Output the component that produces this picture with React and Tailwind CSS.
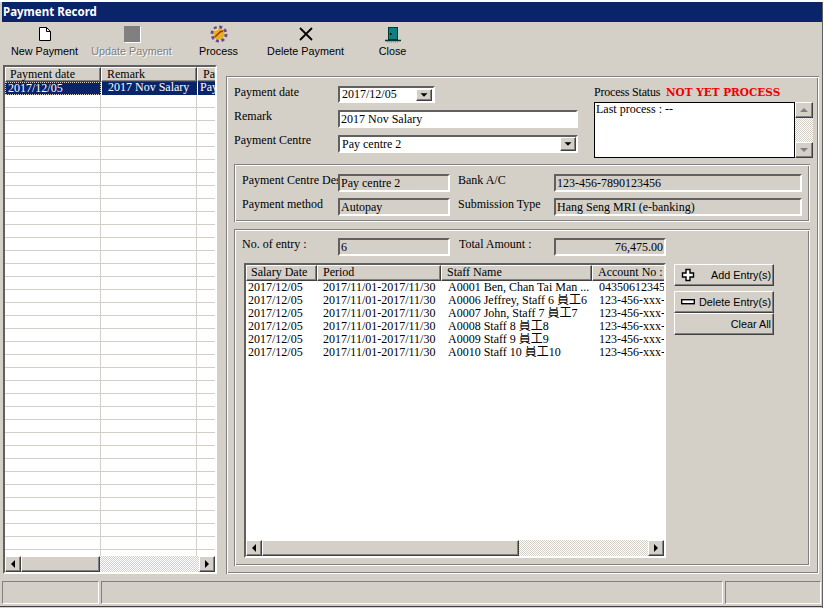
import React from "react";

const raised = "border border-t-white border-l-white border-r-[#404040] border-b-[#404040] shadow-[inset_-1px_-1px_0_#808080] bg-[#d4d0c8]";
const sunken = "border-2 border-t-[#606060] border-l-[#606060] border-r-white border-b-white";
const dither = "bg-[repeating-conic-gradient(#d4d0c8_0_25%,#ffffff_0_50%)] bg-[length:2px_2px]";
const etched = "shadow-[inset_1px_1px_0_#808080,inset_2px_2px_0_#ffffff,inset_-1px_-1px_0_#ffffff,inset_-2px_-2px_0_#808080]";
const sans = "font-[Liberation_Sans,sans-serif] text-[10.8px]";

const entries = [
  ["A0001 Ben, Chan Tai Man ...", "04350612345"],
  ["A0006 Jeffrey, Staff 6 員工6", "123-456-xxx-"],
  ["A0007 John, Staff 7 員工7", "123-456-xxx-"],
  ["A0008 Staff 8 員工8", "123-456-xxx-"],
  ["A0009 Staff 9 員工9", "123-456-xxx-"],
  ["A0010 Staff 10 員工10", "123-456-xxx-"],
];

const emptyRows = Array.from({ length: 36 });

const Arrow = ({ dir, muted }) => {
  const pts = {
    left: "6,4 6,12 2,8",
    right: "2,4 2,12 6,8",
    up: "4,6 12,6 8,2",
    down: "4,2 12,2 8,6",
  };
  const horizontal = dir === "left" || dir === "right";
  return (
    <svg width={horizontal ? 8 : 16} height={horizontal ? 16 : 8} viewBox={horizontal ? "0 0 8 16" : "0 0 16 8"}>
      <polygon points={pts[dir]} fill={muted ? "#808080" : "#000000"} />
    </svg>
  );
};

const ArrowBtn = ({ dir, muted, className }) => (
  <div className={`${raised} flex items-center justify-center shrink-0 ${className}`}>
    <Arrow dir={dir} muted={muted} />
  </div>
);

const HScroll = ({ thumb }) => (
  <div className="flex h-[16px] shrink-0">
    <ArrowBtn dir="left" className="w-[16px]" />
    <div className={`${raised} ${thumb} shrink-0`}></div>
    <div className={`flex-1 ${dither}`}></div>
    <ArrowBtn dir="right" className="w-[16px]" />
  </div>
);

const HeaderCell = ({ w, children, pl = "pl-[5px]", lead = "leading-[13px]" }) => (
  <div className={`${raised} ${w} ${pl} ${lead} h-full overflow-hidden whitespace-nowrap shrink-0`}>{children}</div>
);

const ToolButton = ({ label, disabled, children }) => (
  <div className="w-[87px] h-full flex flex-col items-center shrink-0">
    <div className="h-[24px] w-full flex items-center justify-center">{children}</div>
    <div className={`${sans} mt-[-2px] leading-[14px] whitespace-nowrap ${disabled ? "text-[#808080] [text-shadow:1px_1px_0_#ffffff]" : "text-black"}`}>{label}</div>
  </div>
);

const ReadOnly = ({ children, right }) => (
  <div className={`${sunken} h-[18px] pl-[1px] pr-[1px] leading-[15px] overflow-hidden whitespace-nowrap ${right ? "text-right" : ""}`}>{children}</div>
);

const Label = ({ children, className = "" }) => <div className={`leading-[13px] whitespace-nowrap overflow-hidden ${className}`}>{children}</div>;

const ActionButton = ({ className, children }) => (
  <div className={`${raised} ${sans} w-[100px] flex items-center pr-[2px] whitespace-nowrap ${className}`}>{children}</div>
);

export default function App() {
  return (
    <div className="w-[825px] h-[608px] overflow-hidden bg-white text-black text-[12px] font-[Liberation_Serif,Noto_Sans_CJK_TC,serif]">
      <div className="w-[823px] h-[607px] mt-[2px] bg-[#d4d0c8] border-r border-[#606060]">
        <div className="ml-[2px] h-[20px] bg-[#0a246a] text-white font-[Noto_Sans,sans-serif] font-bold text-[11.5px] leading-[19px] pl-[1px]">
          Payment Record
        </div>

        {/* toolbar */}
        <div className="h-[42px] flex pl-[1px]">
          <ToolButton label="New Payment">
            <svg width="14" height="16" viewBox="0 0 14 16">
              <path d="M1.5 1.5h7l4 4v9h-11z" fill="#ffffff" stroke="#000000" />
              <path d="M8.5 1.5v4h4" fill="none" stroke="#000000" />
            </svg>
          </ToolButton>
          <ToolButton label="Update Payment" disabled>
            <div className="w-[16px] h-[16px] bg-[#808080] shadow-[1px_1px_0_#ffffff]"></div>
          </ToolButton>
          <ToolButton label="Process">
            <svg width="18" height="18" viewBox="0 0 18 18">
              <circle cx="9" cy="9" r="7" fill="none" stroke="#6b4a8a" strokeWidth="3" strokeDasharray="3 2.5" />
              <circle cx="9" cy="9" r="5.5" fill="#e8b020" />
              <path d="M5 12 L10 7 L13 6" fill="none" stroke="#a03010" strokeWidth="1.5" />
              <path d="M5 5 L8 4" stroke="#ffe890" strokeWidth="1.5" />
            </svg>
          </ToolButton>
          <ToolButton label="Delete Payment">
            <svg width="16" height="16" viewBox="0 0 16 16">
              <path d="M2 2 L14 14 M14 2 L2 14" stroke="#000000" strokeWidth="1.8" />
            </svg>
          </ToolButton>
          <ToolButton label="Close">
            <svg width="18" height="17" viewBox="0 0 18 17">
              <rect x="4.5" y="1.5" width="9" height="12" fill="#0f8080" stroke="#003838" />
              <rect x="6" y="7" width="1.5" height="2" fill="#000000" />
              <path d="M1 14.5h16" stroke="#003838" strokeWidth="1.5" />
              <path d="M3 16h12" stroke="#808080" strokeDasharray="1 1" />
            </svg>
          </ToolButton>
        </div>

        <div className="flex mt-[1px] pl-[3px]">
          {/* payment list */}
          <div className={`${sunken} w-[214px] h-[509px] flex flex-col overflow-hidden shrink-0`}>
            <div className="h-[15px] flex shrink-0 overflow-hidden">
              <HeaderCell w="w-[96px]" pl="pl-[4px]" lead="leading-[12px]">Payment date</HeaderCell>
              <HeaderCell w="w-[96px]" lead="leading-[12px]">Remark</HeaderCell>
              <HeaderCell w="w-[30px]" lead="leading-[12px]">Pay</HeaderCell>
            </div>
            <div className="flex-1 bg-white overflow-hidden">
              <div className="h-[13px] flex bg-[#0a246a] text-white leading-[11px] whitespace-nowrap">
                <div className="w-[96px] pl-[2px] border border-dotted border-[#d4d0c8] shrink-0">2017/12/05</div>
                <div className="w-[96px] pl-[6px] border-l border-white shrink-0">2017 Nov Salary</div>
                <div className="flex-1 pl-[2px] border-l border-white overflow-hidden">Pay</div>
              </div>
              {emptyRows.map((_, i) => (
                <div key={i} className="h-[13px] flex border-b border-[#d4d0c8]">
                  <div className="w-[96px] border-r border-[#d4d0c8] shrink-0"></div>
                  <div className="w-[96px] border-r border-[#d4d0c8] shrink-0"></div>
                </div>
              ))}
            </div>
            <HScroll thumb="w-[79px]" />
          </div>

          {/* detail panel */}
          <div className={`${etched} ml-[9px] mt-[11px] w-[593px] h-[498px] pl-[8px] pt-[10px] shrink-0`}>
            <div className="h-[78px] flex">
              <div className="w-[344px] shrink-0">
                <div className="grid grid-cols-[104px_240px] grid-rows-[17px_18px_18px] gap-y-[7px]">
                  <Label>Payment date</Label>
                  <div className={`${sunken} w-[97px] h-[17px] bg-white flex items-center justify-between pl-[2px] pr-[1px]`}>
                    <span className="leading-[15px]">2017/12/05</span>
                    <ArrowBtn dir="down" className="w-[16px] h-[12px]" />
                  </div>
                  <Label>Remark</Label>
                  <div className={`${sunken} bg-white pl-[1px] leading-[15px]`}>2017 Nov Salary</div>
                  <Label className="-mt-[1px]">Payment Centre</Label>
                  <div className={`${sunken} bg-white flex items-center justify-between pl-[2px] pr-[0px]`}>
                    <span className="leading-[14px]">Pay centre 2</span>
                    <ArrowBtn dir="down" className="w-[16px] h-[14px]" />
                  </div>
                </div>
              </div>
              <div className="ml-[16px] w-[217px] shrink-0">
                <div className="h-[16px] flex items-start leading-[13px]">
                  <span className="w-[72px] shrink-0 whitespace-nowrap tracking-[-0.2px]">Process Status</span>
                  <span className="font-[DejaVu_Serif,serif] font-bold text-[#f00000] text-[10.5px] whitespace-nowrap">NOT YET PROCESS</span>
                </div>
                <div className="flex h-[56px]">
                  <div className="w-[201px] border border-black bg-white pl-[1px] leading-[13px] shrink-0">Last process : --</div>
                  <div className={`flex-1 flex flex-col justify-between ${dither}`}>
                    <ArrowBtn dir="up" muted className="h-[16px]" />
                    <ArrowBtn dir="down" muted className="h-[16px]" />
                  </div>
                </div>
              </div>
            </div>

            {/* payment centre info */}
            <div className={`${etched} w-[576px] h-[58px] pl-[8px] pt-[10px]`}>
              <div className="grid grid-cols-[96px_112px_104px_248px] grid-rows-[18px_18px] gap-y-[6px]">
                <Label>Payment Centre Desc</Label>
                <ReadOnly>Pay centre 2</ReadOnly>
                <div className="pl-[8px]"><Label>Bank A/C</Label></div>
                <ReadOnly>123-456-7890123456</ReadOnly>
                <Label>Payment method</Label>
                <ReadOnly>Autopay</ReadOnly>
                <div className="pl-[8px]"><Label>Submission Type</Label></div>
                <ReadOnly>Hang Seng MRI (e-banking)</ReadOnly>
              </div>
            </div>

            {/* entries */}
            <div className={`${etched} w-[576px] h-[337px] mt-[7px] pl-[8px] pt-[9px]`}>
              <div className="grid grid-cols-[96px_112px_104px_112px] grid-rows-[18px]">
                <Label>No. of entry :</Label>
                <ReadOnly>6</ReadOnly>
                <div className="pl-[9px]"><Label>Total Amount :</Label></div>
                <ReadOnly right>76,475.00</ReadOnly>
              </div>
              <div className="flex mt-[7px] ml-[2px]">
                <div className={`${sunken} w-[422px] h-[295px] flex flex-col overflow-hidden shrink-0`}>
                  <div className="h-[16px] flex shrink-0 overflow-hidden">
                    <HeaderCell w="w-[71px]" pl="pl-[4px]">Salary Date</HeaderCell>
                    <HeaderCell w="w-[124px]">Period</HeaderCell>
                    <HeaderCell w="w-[151px]">Staff Name</HeaderCell>
                    <HeaderCell w="w-[80px]">Account No :</HeaderCell>
                  </div>
                  <div className="flex-1 bg-white overflow-hidden">
                    {entries.map((row) => (
                      <div key={row[0]} className="h-[13px] flex leading-[13px] whitespace-nowrap">
                        <div className="w-[71px] pl-[2px] shrink-0">2017/12/05</div>
                        <div className="w-[124px] pl-[6px] shrink-0">2017/11/01-2017/11/30</div>
                        <div className="w-[151px] pl-[7px] shrink-0 overflow-hidden">{row[0]}</div>
                        <div className="flex-1 pl-[7px] overflow-hidden">{row[1]}</div>
                      </div>
                    ))}
                  </div>
                  <HScroll thumb="w-[257px]" />
                </div>
                <div className="ml-[8px] mt-[1px] w-[100px]">
                  <ActionButton className="h-[22px] justify-between pl-[6px]">
                    <svg width="14" height="14" viewBox="0 0 14 14">
                      <path d="M5 1.5h4v3.5h3.5v4H9v3.5H5V9H1.5V5H5z" fill="#ffffff" stroke="#000000" strokeWidth="1.4" />
                    </svg>
                    <span>Add Entry(s)</span>
                  </ActionButton>
                  <ActionButton className="h-[22px] mt-[5px] justify-between pl-[6px]">
                    <svg width="14" height="6" viewBox="0 0 14 6">
                      <rect x="0.7" y="0.7" width="12.6" height="4" fill="#ffffff" stroke="#000000" strokeWidth="1.4" />
                    </svg>
                    <span>Delete Entry(s)</span>
                  </ActionButton>
                  <ActionButton className="h-[22px] justify-end">Clear All</ActionButton>
                </div>
              </div>
            </div>
          </div>
        </div>

        {/* status bar */}
        <div className="flex h-[23px] mt-[7px] ml-[2px]">
          <div className="w-[97px] border border-t-[#808080] border-l-[#808080] border-r-white border-b-white shrink-0"></div>
          <div className="w-[622px] ml-[2px] border border-t-[#808080] border-l-[#808080] border-r-white border-b-white shrink-0"></div>
          <div className="w-[96px] ml-[2px] border border-t-[#808080] border-l-[#808080] border-r-white border-b-white shrink-0"></div>
        </div>
        <div className="h-[1px] mt-[2px] bg-[#404040]"></div>
      </div>
    </div>
  );
}
